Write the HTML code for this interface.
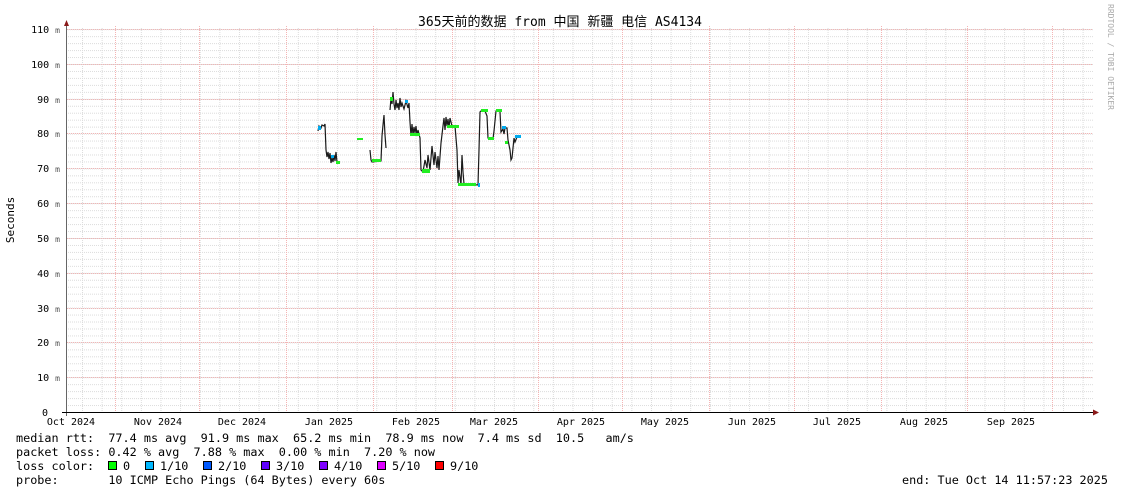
<!DOCTYPE html>
<html><head><meta charset="utf-8"><style>
html,body{margin:0;padding:0;background:#fff;width:1121px;height:494px;overflow:hidden}
svg{display:block}
text{font-family:"DejaVu Sans Mono","Liberation Mono","Noto Sans CJK SC",monospace;fill:#000;white-space:pre}
</style></head><body>
<svg width="1121" height="494" xmlns="http://www.w3.org/2000/svg">
<defs>
<pattern id="hm" x="66" y="29.2" width="1100" height="6.96" patternUnits="userSpaceOnUse">
<line x1="0" y1="0.5" x2="1100" y2="0.5" stroke="#dcdcdc" stroke-width="1" stroke-dasharray="1,1"/>
</pattern>
<pattern id="vm" x="82" y="0" width="19.62" height="500" patternUnits="userSpaceOnUse">
<line x1="0.5" y1="0" x2="0.5" y2="500" stroke="#dcdcdc" stroke-width="1" stroke-dasharray="1,1"/>
</pattern>
</defs>
<rect x="67" y="27" width="1026" height="385" fill="url(#hm)"/>
<rect x="67" y="27" width="1026" height="385" fill="url(#vm)"/>
<g stroke="#f4b4b4" stroke-width="1" stroke-dasharray="1,1">
<line x1="67" y1="29.5" x2="1093" y2="29.5"/>
<line x1="67" y1="64.5" x2="1093" y2="64.5"/>
<line x1="67" y1="99.5" x2="1093" y2="99.5"/>
<line x1="67" y1="133.5" x2="1093" y2="133.5"/>
<line x1="67" y1="168.5" x2="1093" y2="168.5"/>
<line x1="67" y1="203.5" x2="1093" y2="203.5"/>
<line x1="67" y1="238.5" x2="1093" y2="238.5"/>
<line x1="67" y1="273.5" x2="1093" y2="273.5"/>
<line x1="67" y1="308.5" x2="1093" y2="308.5"/>
<line x1="67" y1="342.5" x2="1093" y2="342.5"/>
<line x1="67" y1="377.5" x2="1093" y2="377.5"/>
<line x1="115.5" y1="26" x2="115.5" y2="412"/>
<line x1="199.5" y1="26" x2="199.5" y2="412"/>
<line x1="286.5" y1="26" x2="286.5" y2="412"/>
<line x1="373.5" y1="26" x2="373.5" y2="412"/>
<line x1="452.5" y1="26" x2="452.5" y2="412"/>
<line x1="538.5" y1="26" x2="538.5" y2="412"/>
<line x1="622.5" y1="26" x2="622.5" y2="412"/>
<line x1="709.5" y1="26" x2="709.5" y2="412"/>
<line x1="794.5" y1="26" x2="794.5" y2="412"/>
<line x1="881.5" y1="26" x2="881.5" y2="412"/>
<line x1="967.5" y1="26" x2="967.5" y2="412"/>
<line x1="1052.5" y1="26" x2="1052.5" y2="412"/>
</g>
<line x1="66.5" y1="24" x2="66.5" y2="416" stroke="#666" stroke-width="1"/>
<line x1="62" y1="412.5" x2="1094" y2="412.5" stroke="#000" stroke-width="1"/>
<polygon points="64,26 69,26 66.5,20" fill="#8b1a1a"/>
<polygon points="1093,409.5 1093,415.5 1099,412.5" fill="#8b1a1a"/>
<g fill="none" stroke-width="1.2">
<polyline stroke="#1a1a1a" points="318,131 319,126 321,128 322,125 324,126 325,124 326,150 327,157 328,152 329,159 330,153 331,163 332,158 333,162 334,155 335,161 336,152 337,162"/>
<polyline stroke="#1a1a1a" points="370,150 371,160 372,162 381,161 382,136 383,125 384,115 385,135 386,148"/>
<polyline stroke="#1a1a1a" points="390,110 391,98 392,104 393,92 394,104 395,110 396,100 397,108 398,103 399,110 400,98 401,107 402,103 404,109 406,101 408,108 409,103 410,122 411,136 412,124 413,135 414,127 415,133 416,126 417,136 418,130 420,138 421,170 423,172 425,160 427,168 428,155 430,170 432,146 434,165 435,152 437,168 438,156 439,170 441,143 443,126 444,118 445,130 446,117 447,126 448,119 449,128 450,118 452,126 455,126 457,150 458,183 459,170 461,185 462,155 463,172 464,184 478,185 479,150 480,112 482,110 485,111 487,116 488,138 493,139 494,131 495,121 496,111 498,110 500,112 501,132 503,129 504,134 505,128 507,128 508,140 509,145 510,150 511,160 512,158 513,148 514,138 515,142 517,137 520,137"/>
</g>
<g fill="#22ee22">
<rect x="357" y="138" width="6" height="2"/>
<rect x="372" y="159" width="9" height="3"/>
<rect x="336" y="161" width="4" height="3"/>
<rect x="390" y="97" width="3" height="4"/>
<rect x="410" y="133" width="10" height="3"/>
<rect x="422" y="169" width="8" height="4"/>
<rect x="447" y="125" width="12" height="3"/>
<rect x="458" y="183" width="18" height="3"/>
<rect x="481" y="109" width="7" height="3"/>
<rect x="488" y="137" width="6" height="3"/>
<rect x="496" y="109" width="6" height="3"/>
<rect x="505" y="141" width="3" height="3"/>
</g>
<g fill="#00aaee">
<rect x="318" y="126" width="3" height="4"/>
<rect x="331" y="155" width="3" height="3"/>
<rect x="478" y="183" width="2" height="4"/>
<rect x="515" y="135" width="6" height="3"/>
<rect x="502" y="126" width="4" height="3"/>
<rect x="405" y="100" width="3" height="3"/>
</g>
<g font-size="10" text-anchor="end">
<text x="60" y="33">110 <tspan fill="#555" font-size="8">m</tspan></text>
<text x="60" y="68">100 <tspan fill="#555" font-size="8">m</tspan></text>
<text x="60" y="103">90 <tspan fill="#555" font-size="8">m</tspan></text>
<text x="60" y="137">80 <tspan fill="#555" font-size="8">m</tspan></text>
<text x="60" y="172">70 <tspan fill="#555" font-size="8">m</tspan></text>
<text x="60" y="207">60 <tspan fill="#555" font-size="8">m</tspan></text>
<text x="60" y="242">50 <tspan fill="#555" font-size="8">m</tspan></text>
<text x="60" y="277">40 <tspan fill="#555" font-size="8">m</tspan></text>
<text x="60" y="312">30 <tspan fill="#555" font-size="8">m</tspan></text>
<text x="60" y="346">20 <tspan fill="#555" font-size="8">m</tspan></text>
<text x="60" y="381">10 <tspan fill="#555" font-size="8">m</tspan></text>
<text x="48" y="416">0</text>
</g>
<text x="14" y="220" font-size="11" text-anchor="middle" transform="rotate(-90 14 220)">Seconds</text>
<g font-size="10" text-anchor="middle">
<text x="71" y="425">Oct 2024</text>
<text x="158" y="425">Nov 2024</text>
<text x="242" y="425">Dec 2024</text>
<text x="329" y="425">Jan 2025</text>
<text x="416" y="425">Feb 2025</text>
<text x="494" y="425">Mar 2025</text>
<text x="581" y="425">Apr 2025</text>
<text x="665" y="425">May 2025</text>
<text x="752" y="425">Jun 2025</text>
<text x="837" y="425">Jul 2025</text>
<text x="924" y="425">Aug 2025</text>
<text x="1011" y="425">Sep 2025</text>
</g>
<text x="560" y="26" font-size="13" text-anchor="middle">365天前的数据 from 中国 新疆 电信 AS4134</text>
<text x="1108" y="4" font-size="8" style="fill:#aaa" transform="rotate(90 1108 4)">RRDTOOL / TOBI OETIKER</text>
<g font-size="11.8">
<text x="16" y="442">median rtt:  77.4 ms avg  91.9 ms max  65.2 ms min  78.9 ms now  7.4 ms sd  10.5   am/s</text>
<text x="16" y="456">packet loss: 0.42 % avg  7.88 % max  0.00 % min  7.20 % now</text>
<text x="16" y="470">loss color:</text>
<text x="16" y="484">probe:       10 ICMP Echo Pings (64 Bytes) every 60s</text>
<text x="902" y="484">end: Tue Oct 14 11:57:23 2025</text>
</g>
<g stroke="#000" stroke-width="1">
<rect x="108.5" y="461.5" width="8" height="8" fill="#00ff00"/>
<rect x="145.5" y="461.5" width="8" height="8" fill="#00b8ff"/>
<rect x="203.5" y="461.5" width="8" height="8" fill="#0059ff"/>
<rect x="261.5" y="461.5" width="8" height="8" fill="#5e00ff"/>
<rect x="319.5" y="461.5" width="8" height="8" fill="#7e00ff"/>
<rect x="377.5" y="461.5" width="8" height="8" fill="#dd00ff"/>
<rect x="435.5" y="461.5" width="8" height="8" fill="#ff0000"/>
</g>
<g font-size="11.8">
<text x="123" y="470">0</text>
<text x="160" y="470">1/10</text>
<text x="218" y="470">2/10</text>
<text x="276" y="470">3/10</text>
<text x="334" y="470">4/10</text>
<text x="392" y="470">5/10</text>
<text x="450" y="470">9/10</text>
</g>
</svg>
</body></html>
